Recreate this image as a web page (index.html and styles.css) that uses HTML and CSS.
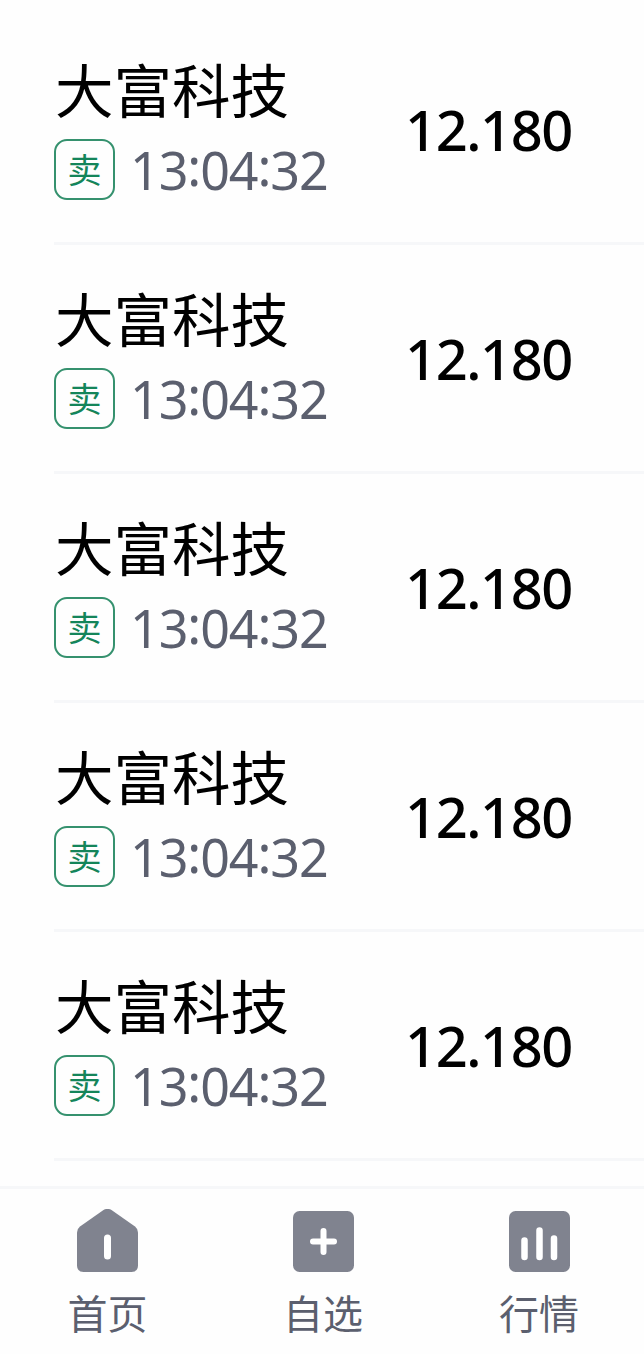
FILE: index.html
```html
<!DOCTYPE html>
<html lang="zh-CN">
<head>
    <meta charset="UTF-8">
    <title>成交</title>
    <link rel="stylesheet" href="styles.css">
</head>
<body>
    <div class="list">
        <div class="row">
            <div class="stock">
                <div class="name">大富科技</div>
                <div class="info"><span class="tag">卖</span><span class="time">13<i>:</i>04<i>:</i>32</span></div>
            </div>
            <div class="price">12.180</div>
        </div>
        <div class="row">
            <div class="stock">
                <div class="name">大富科技</div>
                <div class="info"><span class="tag">卖</span><span class="time">13<i>:</i>04<i>:</i>32</span></div>
            </div>
            <div class="price">12.180</div>
        </div>
        <div class="row">
            <div class="stock">
                <div class="name">大富科技</div>
                <div class="info"><span class="tag">卖</span><span class="time">13<i>:</i>04<i>:</i>32</span></div>
            </div>
            <div class="price">12.180</div>
        </div>
        <div class="row">
            <div class="stock">
                <div class="name">大富科技</div>
                <div class="info"><span class="tag">卖</span><span class="time">13<i>:</i>04<i>:</i>32</span></div>
            </div>
            <div class="price">12.180</div>
        </div>
        <div class="row">
            <div class="stock">
                <div class="name">大富科技</div>
                <div class="info"><span class="tag">卖</span><span class="time">13<i>:</i>04<i>:</i>32</span></div>
            </div>
            <div class="price">12.180</div>
        </div>
    </div>

    <div class="tabbar">
        <div class="tab">
            <svg width="61" height="64" viewBox="0 0 61 64">
                <path fill="#80838f" d="M26.500 1Q30.500 -1.200 34.500 1L58 17.500Q61 19.800 61 23.500V56.500Q61 63 54.500 63H6.500Q0 63 0 56.500V23.500Q0 19.800 3 17.500Z"/>
                <rect x="27" y="25.500" width="7" height="25" rx="3.500" fill="#fff"/>
            </svg>
            <span>首页</span>
        </div>
        <div class="tab">
            <svg width="61" height="64" viewBox="0 0 61 64">
                <rect y="2" width="61" height="61" rx="6.500" fill="#80838f"/>
                <path d="M20 32.500H41M30.500 22V43" stroke="#fff" stroke-width="6" stroke-linecap="round"/>
            </svg>
            <span>自选</span>
        </div>
        <div class="tab">
            <svg width="61" height="64" viewBox="0 0 61 64">
                <rect y="2" width="61" height="61" rx="6.500" fill="#80838f"/>
                <path d="M15.500 31.500V48M30.500 21.500V48M45 29.500V48" stroke="#fff" stroke-width="6.500" stroke-linecap="round"/>
            </svg>
            <span>行情</span>
        </div>
    </div>
</body>
</html>
```
FILE: styles.css
```css
body {
    margin: 0;
    height: 1354px;
    display: flex;
    flex-direction: column;
    overflow: hidden;
    background-color: #fefefe;
    font-family: "Noto Sans", "Noto Sans CJK SC", sans-serif;
}

.list {
    height: 1170px;
    padding-top: 16px;
    padding-left: 54px;
}

.row {
    display: flex;
    box-sizing: border-box;
    height: 229px;
    border-bottom: 3px solid #f6f7f9;
}

.stock {
    width: 351px;
    padding-top: 36px;
}

.name {
    height: 87px;
    padding-left: 1px;
    box-sizing: border-box;
    line-height: 72px;
    font-family: "Noto Sans CJK SC", sans-serif;
    font-size: 58.500px;
    color: #000;
}

.info {
    display: flex;
    align-items: center;
    height: 61px;
}

.tag {
    box-sizing: border-box;
    width: 61px;
    height: 61px;
    margin-right: 15px;
    border: 2px solid #35916e;
    border-radius: 13px;
    line-height: 56px;
    text-align: center;
    font-family: "Noto Sans CJK SC", sans-serif;
    font-size: 34px;
    color: #14855a;
}

.time {
    font-size: 52px;
    font-weight: 450;
    line-height: 61px;
    letter-spacing: -1.100px;
    color: #5b5f6e;
}

/* lift the colon to the middle of the digits */
.time i {
    font-style: normal;
    line-height: 1;
    vertical-align: 4px;
}

.price {
    padding-top: 73px;
    line-height: 80px;
    font-size: 56px;
    font-weight: 500;
    letter-spacing: -1.400px;
    color: #000;
}

.tabbar {
    display: flex;
    height: 165px;
    border-top: 3px solid #f6f7f9;
}

.tab {
    width: 216px;
    flex-shrink: 0;
    display: flex;
    flex-direction: column;
    align-items: center;
    padding-top: 20px;
}

.tab:first-child {
    width: 215px;
}

.tab svg {
    display: block;
}

.tab span {
    margin-top: 10px;
    font-family: "Noto Sans CJK SC", sans-serif;
    font-size: 40px;
    line-height: 58px;
    color: #5b5f6e;
}
```
